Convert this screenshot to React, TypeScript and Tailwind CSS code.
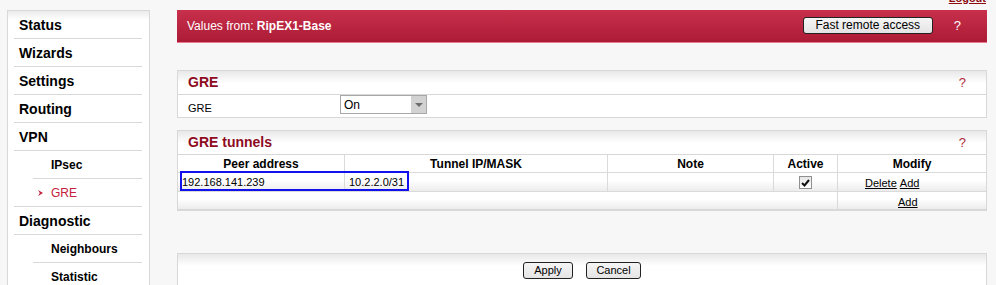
type MenuItem = {
    label: string;
    sub?: boolean;
    active?: boolean;
    fullLine?: boolean;
};

const menu: MenuItem[] = [
    { label: "Status" },
    { label: "Wizards" },
    { label: "Settings" },
    { label: "Routing" },
    { label: "VPN" },
    { label: "IPsec", sub: true },
    { label: "GRE", sub: true, active: true, fullLine: true },
    { label: "Diagnostic" },
    { label: "Neighbours", sub: true },
    { label: "Statistic", sub: true },
];

const Sidebar = () => {
    return (
        <div className="w-[143px] h-[300px] border border-[#d8d8d8] bg-white bg-[linear-gradient(#ebebeb,#ffffff_9px)]">
            {menu.map((item, index) => {
                const next = menu[index + 1];
                const subLine = item.sub && !item.fullLine && next && next.sub;
                return (
                    <div key={index} className="relative h-[28px] flex items-center">
                        {item.sub ? (
                            <div className={`pl-[43px] flex items-center text-[12px] ${item.active ? "text-[#c4203c]" : "font-bold text-black"}`}>
                                {item.active && (
                                    <svg width="5" height="6" viewBox="0 0 5 6" className="mr-[8px] -ml-[13px]">
                                        <path d="M0 0 L5 3 L0 6 L1.8 3 Z" fill="#c4203c" />
                                    </svg>
                                )}
                                {item.label}
                            </div>
                        ) : (
                            <div className="pl-[11px] text-[14px] font-bold text-black">{item.label}</div>
                        )}
                        <div className={`absolute bottom-0 right-[7px] h-px bg-[#d9d9d9] ${subLine ? "left-[25px]" : "left-[6px]"}`} />
                    </div>
                );
            })}
        </div>
    );
};

const PanelHeader = ({ title }: { title?: string }) => (
    <div className="h-[24px] border-b border-[#d8d8d8] bg-[linear-gradient(#e8e8e8,#ffffff_12px)] flex items-center justify-between pl-[10px] pr-[20px]">
        <span className="text-[14px] font-bold text-[#8e0b1f]">{title}</span>
        {title && <span className="text-[13px] text-[#b3283c]">?</span>}
    </div>
);

const cols = "grid grid-cols-[166px_263px_166px_64px_149px]";

const Checkbox = () => (
    <span className="w-[13px] h-[13px] border border-[#8f8f8f] bg-[linear-gradient(#e6e6e6,#ffffff)] flex items-center justify-center">
        <svg width="9" height="8" viewBox="0 0 9 8">
            <path d="M1 4 L3.5 6.5 L8 1" stroke="#111" strokeWidth="2" fill="none" />
        </svg>
    </span>
);

const App = () => {
    return (
        <div className="h-[285px] overflow-hidden bg-[#f7f7f7] [font-family:'Liberation_Sans',Arial,sans-serif] text-black flex pl-[7px] pt-[10px]">
            <Sidebar />

            <div className="ml-[27px] w-[810px] -mt-[10px]">
                <div className="h-[10px] flex justify-end">
                    <a className="-mt-[8px] mr-[1px] text-[11px] leading-[13px] font-bold underline text-[#8b0c12]">Logout</a>
                </div>

                <div className="h-[33px] border-b border-[#e57b8c] bg-[linear-gradient(#c8304c,#ac1b35)] flex items-center justify-between pl-[10px] pr-[26px] text-white text-[12px]">
                    <div>
                        Values from: <span className="font-bold">RipEX1-Base</span>
                    </div>
                    <div className="flex items-center">
                        <button className="w-[130px] h-[17px] -mt-[2px] border border-[#222] rounded-[3px] bg-[linear-gradient(#f5f5f5,#e4e4e4)] text-black text-[12px] leading-[15px]">
                            Fast remote access
                        </button>
                        <span className="ml-[21px] text-[13px]">?</span>
                    </div>
                </div>

                {/* GRE */}
                <div className="mt-[27px] border border-[#d8d8d8] bg-white">
                    <PanelHeader title="GRE" />
                    <div className="h-[22px] flex pl-[10px] text-[11px]">
                        <div className="w-[152px] pt-[5px]">GRE</div>
                        <div className="w-[87px] h-[19px] border border-[#a8a8a8] bg-white flex items-center">
                            <span className="flex-1 pl-[3px] text-[12px]">On</span>
                            <span className="w-[15px] h-[17px] bg-[#d2d2d2] flex items-center justify-center">
                                <svg width="8" height="4" viewBox="0 0 8 4">
                                    <path d="M0 0 L8 0 L4 4 Z" fill="#6d6d6d" />
                                </svg>
                            </span>
                        </div>
                    </div>
                </div>

                {/* GRE tunnels */}
                <div className="mt-[12px] border border-[#d8d8d8] border-b-2 bg-white">
                    <PanelHeader title="GRE tunnels" />
                    <div className="relative text-[11px]">
                        <div className={`${cols} h-[18px] border-b border-[#dadada] font-bold text-[12px] bg-white`}>
                            <div className="flex items-center justify-center">Peer address</div>
                            <div className="border-l border-[#dadada] flex items-center justify-center">Tunnel IP/MASK</div>
                            <div className="border-l border-[#dadada] flex items-center justify-center">Note</div>
                            <div className="border-l border-[#dadada] flex items-center justify-center">Active</div>
                            <div className="border-l border-[#dadada] flex items-center justify-center">Modify</div>
                        </div>
                        <div className={`${cols} h-[19px] border-b border-[#dadada] bg-[linear-gradient(#ffffff,#ffffff_40%,#ececec)]`}>
                            <div className="flex items-center pl-[4px]">192.168.141.239</div>
                            <div className="border-l border-[#dadada] flex items-center pl-[4px]">10.2.2.0/31</div>
                            <div className="border-l border-[#dadada]" />
                            <div className="border-l border-[#dadada] flex items-center justify-center pt-px">
                                <Checkbox />
                            </div>
                            <div className="border-l border-[#dadada] flex items-center pl-[27px] pt-[2px] gap-[3px]">
                                <a className="underline">Delete</a>
                                <a className="underline">Add</a>
                            </div>
                        </div>
                        <div className="grid grid-cols-[659px_149px] h-[17px] bg-[linear-gradient(#ffffff,#ffffff_40%,#ececec)]">
                            <div />
                            <div className="border-l border-[#dadada] flex items-center pl-[60px] pt-[2px]">
                                <a className="underline">Add</a>
                            </div>
                        </div>
                        <div className="absolute left-[2px] top-[16px] w-[229px] h-[20px] border-2 border-[#1111ee]" />
                    </div>
                </div>

                {/* buttons */}
                <div className="mt-[42px] h-[40px] border border-[#d8d8d8] bg-white bg-[linear-gradient(#e8e8e8,#ffffff_12px)] flex justify-center gap-[13px] pt-[8px]">
                    <button className="w-[50px] h-[17px] border border-[#222] rounded-[3px] bg-[linear-gradient(#f5f5f5,#e4e4e4)] text-[11px] leading-[15px]">Apply</button>
                    <button className="w-[55px] h-[17px] border border-[#222] rounded-[3px] bg-[linear-gradient(#f5f5f5,#e4e4e4)] text-[11px] leading-[15px]">Cancel</button>
                </div>
            </div>
        </div>
    );
};

export default App;
